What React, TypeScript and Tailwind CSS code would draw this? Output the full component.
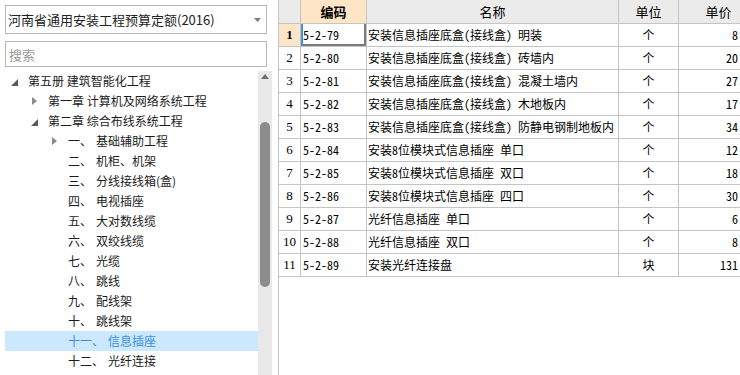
import React from "react";

type TreeNode = {
  level: number;
  state: "open" | "closed" | "leaf";
  label: string;
  title?: string;
  selected?: boolean;
};

const treeNodes: TreeNode[] = [
  { level: 0, state: "open", label: "第五册 建筑智能化工程" },
  { level: 1, state: "closed", label: "第一章 计算机及网络系统工程" },
  { level: 1, state: "open", label: "第二章 综合布线系统工程" },
  { level: 2, state: "closed", label: "一、", title: "基础辅助工程" },
  { level: 2, state: "leaf", label: "二、", title: "机柜、机架" },
  { level: 2, state: "leaf", label: "三、", title: "分线接线箱(盒)" },
  { level: 2, state: "leaf", label: "四、", title: "电视插座" },
  { level: 2, state: "leaf", label: "五、", title: "大对数线缆" },
  { level: 2, state: "leaf", label: "六、", title: "双绞线缆" },
  { level: 2, state: "leaf", label: "七、", title: "光缆" },
  { level: 2, state: "leaf", label: "八、", title: "跳线" },
  { level: 2, state: "leaf", label: "九、", title: "配线架" },
  { level: 2, state: "leaf", label: "十、", title: "跳线架" },
  { level: 2, state: "leaf", label: "十一、", title: "信息插座", selected: true },
  { level: 2, state: "leaf", label: "十二、", title: "光纤连接" },
];

const rows = [
  { code: "5-2-79", name: "安装信息插座底盒(接线盒) 明装", unit: "个", price: "8" },
  { code: "5-2-80", name: "安装信息插座底盒(接线盒) 砖墙内", unit: "个", price: "20" },
  { code: "5-2-81", name: "安装信息插座底盒(接线盒) 混凝土墙内", unit: "个", price: "27" },
  { code: "5-2-82", name: "安装信息插座底盒(接线盒) 木地板内", unit: "个", price: "17" },
  { code: "5-2-83", name: "安装信息插座底盒(接线盒) 防静电钢制地板内", unit: "个", price: "34" },
  { code: "5-2-84", name: "安装8位模块式信息插座 单口", unit: "个", price: "12" },
  { code: "5-2-85", name: "安装8位模块式信息插座 双口", unit: "个", price: "18" },
  { code: "5-2-86", name: "安装8位模块式信息插座 四口", unit: "个", price: "30" },
  { code: "5-2-87", name: "光纤信息插座 单口", unit: "个", price: "6" },
  { code: "5-2-88", name: "光纤信息插座 双口", unit: "个", price: "8" },
  { code: "5-2-89", name: "安装光纤连接盘", unit: "块", price: "131" },
];

const uiFont = "font-['Noto_Sans_CJK_SC','Noto_Sans',sans-serif]";
const cellFont = "font-['Noto_Sans_Mono_CJK_SC','Noto_Sans_CJK_SC',monospace]";

const TreeArrow = ({ state }: { state: TreeNode["state"] }) => {
  if (state === "open") {
    return (
      <svg width="7" height="7" viewBox="0 0 7 7" className="mt-[2px]">
        <polygon points="7,0 7,7 0,7" fill="#5a5a5a" />
      </svg>
    );
  }
  if (state === "closed") {
    return (
      <svg width="5" height="8" viewBox="0 0 5 8">
        <polygon points="0,0 5,4 0,8" fill="#8a8a8a" />
      </svg>
    );
  }
  return null;
};

const LeftPanel = () => (
  <div className={`w-[272px] h-full flex flex-col ${uiFont}`}>
    <div className="mx-[5px] mt-[5px] h-[29px] border border-[#b9b9b9] flex items-center justify-between pl-[2px] pr-[5px]">
      <span className="text-[13px] text-[#222] leading-none">河南省通用安装工程预算定额(2016)</span>
      <svg width="7" height="4" viewBox="0 0 7 4">
        <polygon points="0,0 7,0 3.5,4" fill="#7d7d7d" />
      </svg>
    </div>
    <div className="mx-[5px] mt-[7px] h-[26px] border border-[#b9b9b9] flex items-center pl-[3px]">
      <span className="text-[13px] text-[#9a9a9a] leading-none">搜索</span>
    </div>
    <div className="flex flex-1 mt-[4px] min-h-0">
      <div className="ml-[5px] w-[253px] overflow-hidden">
        {treeNodes.map((n, i) => (
          <div
            key={i}
            className={`h-[20px] flex items-center text-[12px] ${n.selected ? "bg-[#cce8ff] text-[#3b8ee0]" : "text-[#1b1b1b]"}`}
            style={{ paddingLeft: n.level * 20 }}
          >
            <span className="w-[18px] flex justify-center items-center">
              <TreeArrow state={n.state} />
            </span>
            <span className="ml-[5px] whitespace-nowrap">{n.label}</span>
            {n.title && <span className="ml-[4px] whitespace-nowrap">{n.title}</span>}
          </div>
        ))}
      </div>
      <div className="w-[14px] bg-[#e8e8e8] flex flex-col items-center">
        <svg width="8" height="5" viewBox="0 0 8 5" className="mt-[3px]">
          <polygon points="0,5 8,5 4,0" fill="#6e6e6e" />
        </svg>
        <div className="w-[10px] h-[165px] mt-[43px] rounded-full bg-[#8c8c8c]" />
      </div>
    </div>
  </div>
);

const Grid = () => (
  <div className={`flex-1 h-full border-l border-[#c4c4c4] overflow-hidden text-black ${cellFont}`}>
    <div className="flex h-[24px] bg-[#ebebeb] border-b border-[#c4c4c4] text-[13px] w-[800px]">
      <div className="w-[22px] border-r border-[#c4c4c4]" />
      <div className={`w-[66px] border-r border-[#c4c4c4] bg-[#fde5c6] flex items-center justify-center font-bold ${uiFont}`}>编码</div>
      <div className={`w-[252px] border-r border-[#c4c4c4] flex items-center justify-center ${uiFont}`}>名称</div>
      <div className={`w-[60px] border-r border-[#c4c4c4] flex items-center justify-center ${uiFont}`}>单位</div>
      <div className={`w-[80px] border-r border-[#c4c4c4] flex items-center justify-center ${uiFont}`}>单价</div>
    </div>
    {rows.map((r, i) => (
      <div key={r.code} className="flex h-[23px] border-b border-[#c4c4c4] text-[12px] w-[800px]">
        <div
          className={`w-[22px] border-r border-[#c4c4c4] flex items-center justify-center font-['Liberation_Serif',serif] text-[13px] ${i === 0 ? "bg-[#fde5c6] font-bold" : ""}`}
        >
          {i + 1}
        </div>
        <div
          className={`w-[66px] border-r border-[#c4c4c4] flex items-center pl-[2px] ${i === 0 ? "shadow-[inset_2px_0_0_#3f90e6,inset_-2px_-2px_0_#7a7a7a]" : ""}`}
        >
          {r.code}
        </div>
        <div className="w-[252px] border-r border-[#c4c4c4] flex items-center pl-[1px] whitespace-nowrap overflow-hidden">
          {r.name}
        </div>
        <div className="w-[60px] border-r border-[#c4c4c4] flex items-center justify-center">{r.unit}</div>
        <div className="w-[80px] border-r border-[#c4c4c4] flex items-center justify-end pr-[20px]">{r.price}</div>
      </div>
    ))}
  </div>
);

export default function App() {
  return (
    <div className="w-[740px] h-[375px] bg-white flex overflow-hidden">
      <LeftPanel />
      <div className="w-[6px]" />
      <Grid />
    </div>
  );
}
